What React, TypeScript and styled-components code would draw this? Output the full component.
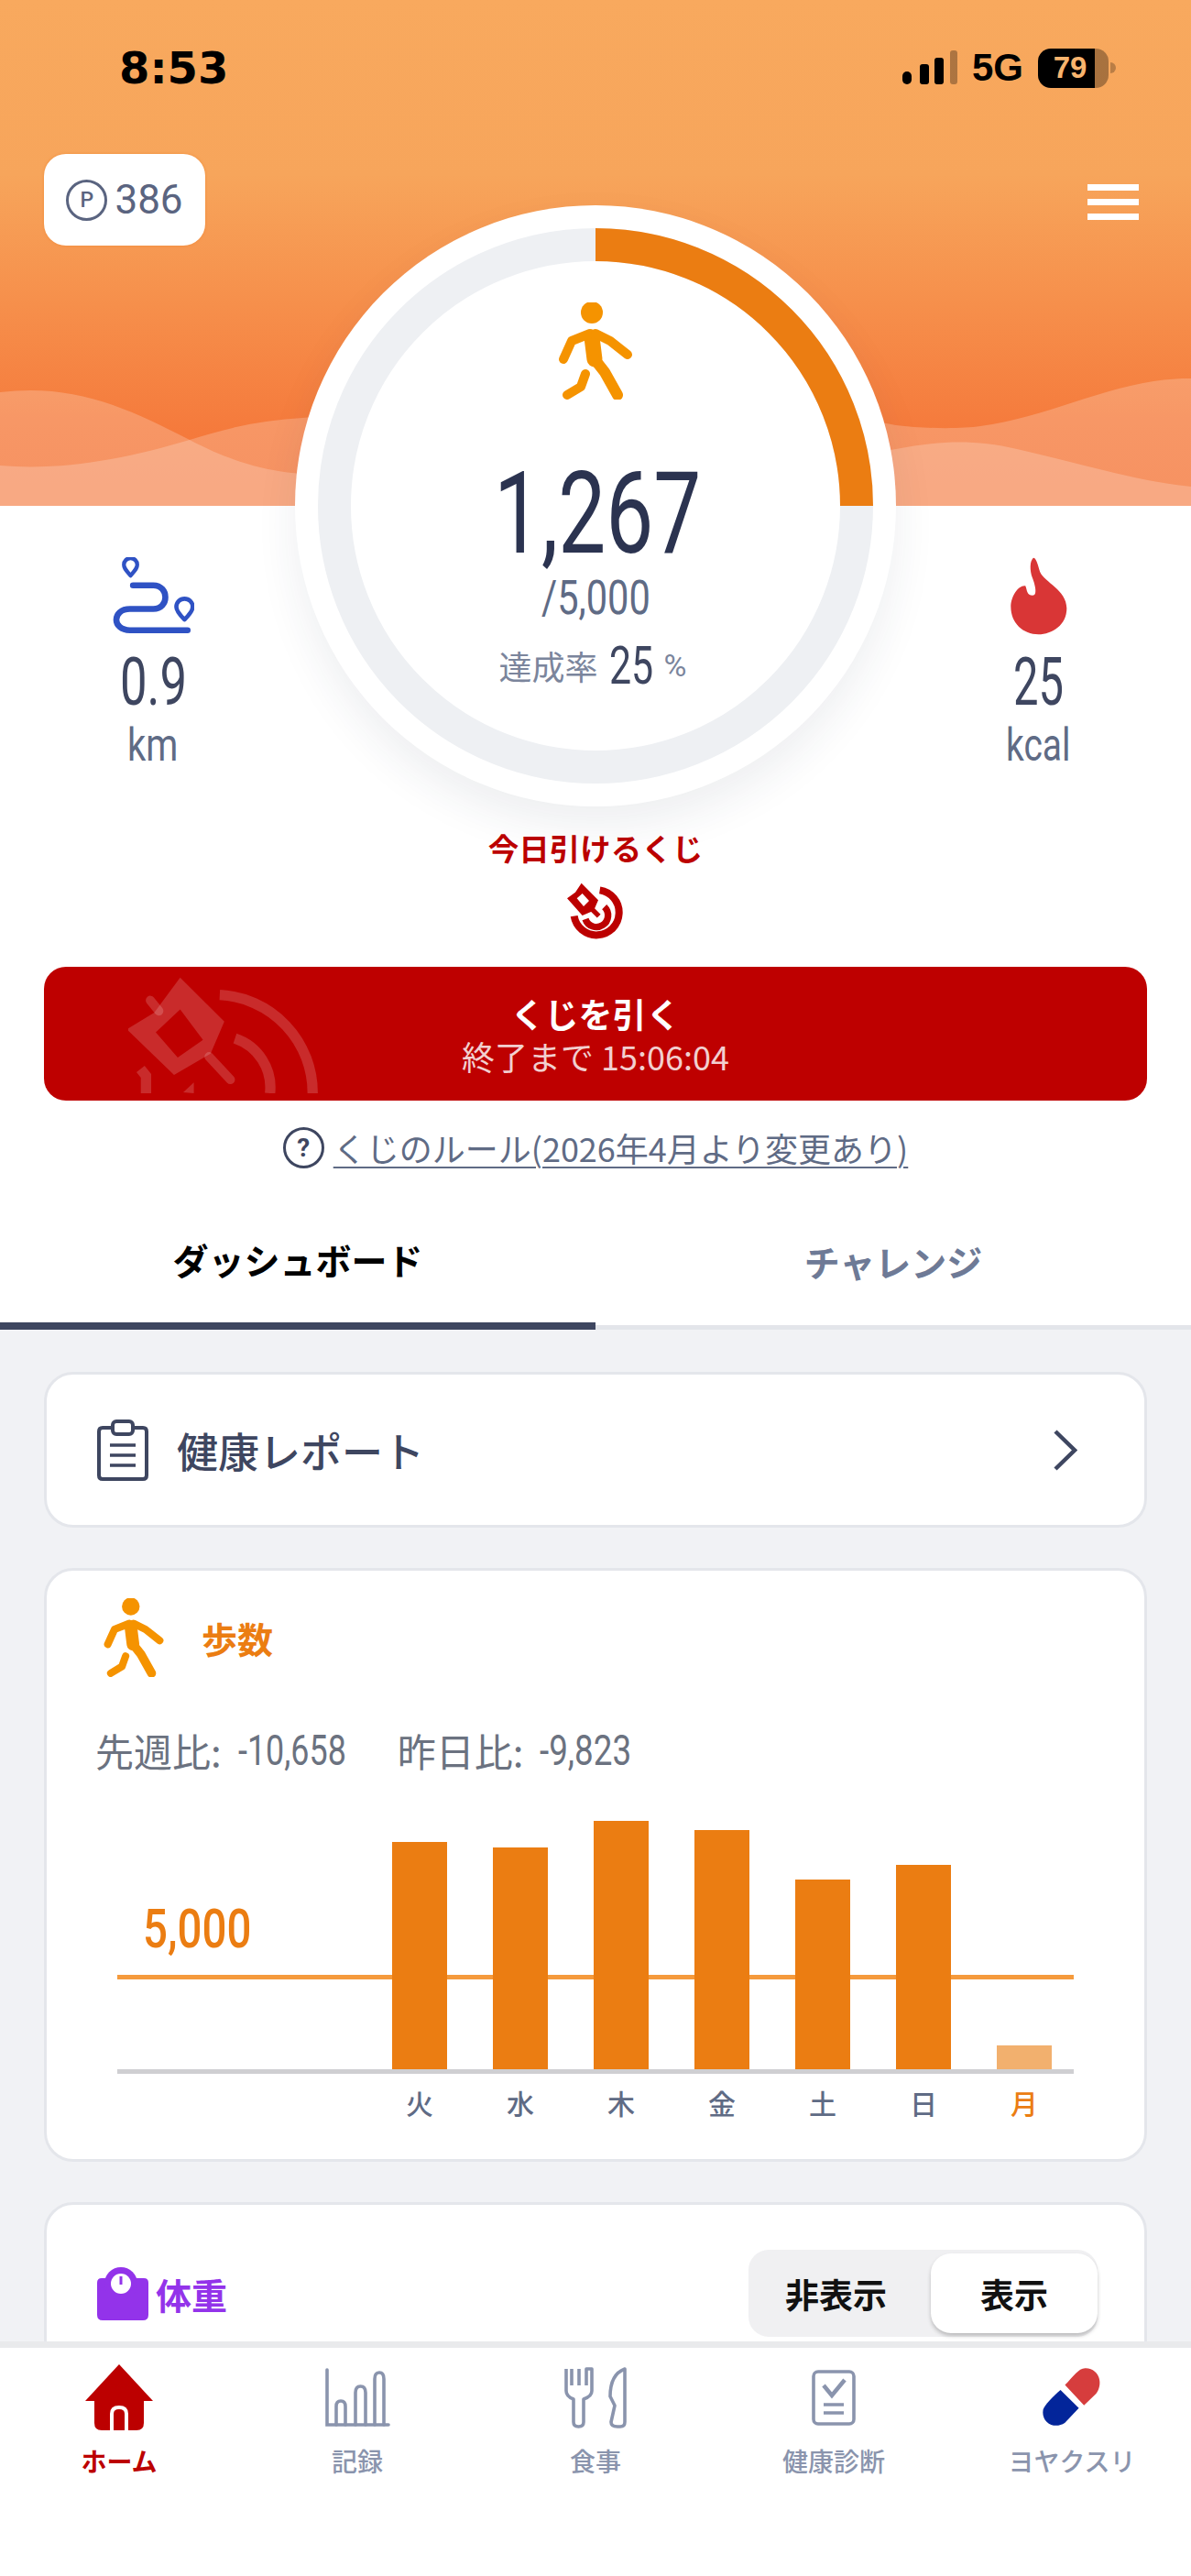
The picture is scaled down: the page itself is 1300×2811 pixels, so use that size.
import styled, { createGlobalStyle } from "styled-components";

const GlobalStyle = createGlobalStyle`
    html, body {
        margin: 0;
        padding: 0;
        background: #fff;
    }
    body {
        font-family: "Noto Sans CJK JP", "Noto Sans", sans-serif;
    }
    * {
        box-sizing: border-box;
    }
`
const Page = styled.div`
    width: 1300px;
    height: 2811px;
    display: flex;
    flex-direction: column;
    overflow: hidden;
    background: #fff;
`
const Hero = styled.section`
    position: relative;
    flex: none;
    height: 881px;
    background: linear-gradient(180deg, #f8a95e 0, #f7a55b 190px, #f57a3c 470px, #f47538 552px) top / 100% 552px no-repeat;
`
const Waves = styled.svg`
    position: absolute;
    left: 0;
    top: 0;
`
const StatusBar = styled.div`
    position: relative;
    height: 168px;
    padding: 50px 82px 0 130px;
    display: flex;
    justify-content: space-between;
    align-items: flex-start;
`
const Time = styled.div`
    font-family: "DejaVu Sans", sans-serif;
    font-weight: 700;
    font-size: 48px;
    line-height: 48px;
    color: #000;
`
const StatusRight = styled.div`
    display: flex;
    align-items: center;
    gap: 16px;
    height: 48px;
`
const Network = styled.span`
    font-family: "Liberation Sans", sans-serif;
    font-weight: 700;
    font-size: 42px;
    line-height: 48px;
    color: #000;
`
const Battery = styled.div`
    display: flex;
    align-items: center;
    height: 43px;
`
const BatteryFill = styled.div`
    width: 62px;
    height: 43px;
    padding-left: 8px;
    background: #000;
    border-radius: 14px 0 0 14px;
    display: flex;
    align-items: center;
    justify-content: center;
    font-family: "Liberation Sans", sans-serif;
    font-weight: 700;
    font-size: 33px;
    color: #f8b46e;
`
const BatteryRest = styled.div`
    width: 15px;
    height: 43px;
    background: rgba(0, 0, 0, 0.32);
    border-radius: 0 14px 14px 0;
`
const BatteryTip = styled.div`
    width: 6px;
    height: 12px;
    margin-left: 2px;
    background: rgba(0, 0, 0, 0.25);
    border-radius: 0 6px 6px 0;
`
const HeroGrid = styled.div`
    position: relative;
    display: grid;
    grid-template-columns: 322px 656px 322px;
    height: 713px;
`
const SideColumn = styled.div<{ $right?: boolean }>`
    display: flex;
    flex-direction: column;
    align-items: ${(p) => (p.$right ? "flex-end" : "flex-start")};
    padding: ${(p) => (p.$right ? "0 48px 43px 0" : "0 0 43px 48px")};
`
const PointBadge = styled.div`
    width: 176px;
    height: 100px;
    background: #fff;
    border-radius: 24px;
    box-shadow: 0 0 3px rgba(240, 130, 40, 0.7);
    display: flex;
    align-items: center;
    justify-content: center;
    gap: 8px;
    font-family: "Roboto", sans-serif;
    font-size: 44px;
    color: #5a6480;
`
const PointMark = styled.span`
    width: 45px;
    height: 45px;
    border: 3px solid #5a6480;
    border-radius: 50%;
    display: flex;
    align-items: center;
    justify-content: center;
    font-family: "Roboto", sans-serif;
    font-weight: 500;
    font-size: 23px;
`
const MenuButton = styled.div`
    width: 56px;
    margin: 33px 9px 0 0;
    display: flex;
    flex-direction: column;
    gap: 9px;
    span {
        display: block;
        height: 7px;
        background: #fff;
    }
`
const Stat = styled.div`
    margin-top: auto;
    width: 238px;
    display: flex;
    flex-direction: column;
    align-items: center;
`
const StatIcon = styled.div`
    height: 85px;
    display: flex;
    align-items: center;
    justify-content: center;
`
const Narrow = styled.span<{ $w: number; $sx: number; $size: number; $weight?: number; $color?: string }>`
    display: inline-block;
    width: ${(p) => p.$w}px;
    font-family: "Roboto", sans-serif;
    font-size: ${(p) => p.$size}px;
    font-weight: ${(p) => p.$weight ?? 400};
    line-height: ${(p) => p.$size}px;
    color: ${(p) => p.$color ?? "#3e4660"};
    white-space: nowrap;
    transform: scaleX(${(p) => p.$sx});
    transform-origin: left center;
`
const StatValue = styled.div`
    margin-top: 16px;
    display: flex;
`
const StatUnit = styled.div`
    margin-top: 7px;
    display: flex;
`
const Ring = styled.div`
    position: relative;
    width: 656px;
    height: 656px;
    margin-top: 56px;
    padding-top: 106px;
    background: #fff;
    border-radius: 50%;
    box-shadow: 0 22px 46px rgba(40, 50, 80, 0.08);
    display: flex;
    flex-direction: column;
    align-items: center;
`
const Gauge = styled.svg`
    position: absolute;
    left: 0;
    top: 0;
`
const RingIcon = styled.svg`
    position: relative;
    flex: none;
`
const StepCount = styled.div`
    position: relative;
    margin-top: 62px;
    display: flex;
`
const StepGoal = styled.div`
    position: relative;
    margin-top: 4px;
    display: flex;
`
const Rate = styled.div`
    position: relative;
    margin: 18px 6px 0 0;
    display: flex;
    align-items: center;
    gap: 12px;
    font-size: 36px;
    color: #7b859c;
`
const RatePercent = styled.span`
    font-family: "Roboto", sans-serif;
    font-size: 34px;
`
const Lottery = styled.section`
    flex: none;
    padding: 20px 48px 0;
    display: flex;
    flex-direction: column;
    align-items: center;
`
const LotteryLabel = styled.div`
    font-size: 33.5px;
    font-weight: 700;
    line-height: 48px;
    color: #bc0000;
`
const LotteryIcon = styled.svg`
    display: block;
    margin-top: 14px;
`
const DrawButton = styled.div`
    position: relative;
    width: 100%;
    height: 146px;
    margin-top: 27px;
    background: #be0000;
    border-radius: 24px;
    overflow: hidden;
    display: flex;
    flex-direction: column;
    align-items: center;
    justify-content: center;
`
const DrawWatermark = styled.svg`
    position: absolute;
    left: 92px;
    top: 10px;
`
const DrawTitle = styled.div`
    position: relative;
    font-size: 37px;
    font-weight: 700;
    line-height: 48px;
    color: #fff;
`
const DrawSub = styled.div`
    position: relative;
    font-size: 36px;
    line-height: 44px;
    color: rgba(255, 255, 255, 0.82);
`
const RuleLink = styled.div`
    margin-top: 28px;
    height: 46px;
    display: flex;
    align-items: center;
    gap: 10px;
    font-size: 36px;
    color: #5f6b85;
    span:last-child {
        text-decoration: underline;
        text-underline-offset: 5px;
        text-decoration-thickness: 2px;
    }
`
const RuleMark = styled.span`
    width: 45px;
    height: 45px;
    border: 3px solid #3e4660;
    border-radius: 50%;
    display: flex;
    align-items: center;
    justify-content: center;
    font-family: "Roboto", sans-serif;
    font-weight: 700;
    font-size: 28px;
    color: #3e4660;
`
const Tabs = styled.div`
    flex: none;
    margin-top: 22px;
    display: flex;
`
const Tab = styled.div<{ $active?: boolean }>`
    flex: 1;
    height: 154px;
    padding-top: 8px;
    display: flex;
    align-items: center;
    justify-content: center;
    font-size: 39px;
    font-weight: 700;
    color: ${(p) => (p.$active ? "#000" : "#6e7a96")};
    border-bottom: ${(p) => (p.$active ? "8px solid #3e4660" : "5px solid #e3e5ea")};
`
const Content = styled.main`
    flex: 1;
    min-height: 0;
    overflow: hidden;
    padding: 46px 48px 0;
    background: #f1f2f5;
    display: flex;
    flex-direction: column;
    gap: 44px;
`
const Card = styled.div`
    flex: none;
    background: #fff;
    border: 3px solid #e4e6eb;
    border-radius: 32px;
`
const ReportCard = styled(Card)`
    height: 170px;
    padding: 0 73px 0 55px;
    display: flex;
    align-items: center;
    gap: 31px;
    font-size: 45px;
    font-weight: 500;
    color: #3e4660;
`
const Chevron = styled.svg`
    margin-left: auto;
`
const StepsCard = styled(Card)`
    height: 648px;
    padding: 30px 77px 0 53px;
`
const StepsHeader = styled.div`
    padding-left: 8px;
    height: 86px;
    display: flex;
    align-items: center;
    gap: 40px;
    font-size: 39px;
    font-weight: 700;
    color: #eb7d12;
`
const Compare = styled.div`
    margin-top: 55px;
    height: 50px;
    display: flex;
    align-items: center;
    gap: 56px;
`
const CompareItem = styled.div`
    display: flex;
    align-items: center;
    gap: 18px;
    font-size: 42px;
    line-height: 50px;
    color: #6b7280;
`
const Chart = styled.div`
    margin: 52px 0 0 24px;
`
const Plot = styled.div`
    position: relative;
    height: 271px;
    box-sizing: content-box;
    padding-right: 24px;
    border-bottom: 5px solid #cfcfd2;
    display: flex;
    align-items: flex-end;
    justify-content: flex-end;
    gap: 50px;
`
const GoalLine = styled.div`
    position: absolute;
    left: 0;
    right: 0;
    bottom: 98px;
    height: 5px;
    background: #f59a3c;
`
const GoalLabel = styled.div`
    position: absolute;
    left: 28px;
    top: 88px;
`
const Bar = styled.div<{ $today?: boolean }>`
    position: relative;
    width: 60px;
    background: ${(p) => (p.$today ? "#f2b06e" : "#eb7d12")};
`
const Days = styled.div`
    margin-top: 11px;
    padding-right: 24px;
    display: flex;
    justify-content: flex-end;
    gap: 50px;
`
const Day = styled.div<{ $today?: boolean }>`
    width: 60px;
    text-align: center;
    font-size: 30px;
    font-weight: 500;
    line-height: 40px;
    color: ${(p) => (p.$today ? "#eb7d12" : "#5f6b85")};
`
const WeightCard = styled(Card)`
    height: 300px;
    padding: 49px 51px 0 55px;
    display: flex;
    align-items: flex-start;
    justify-content: space-between;
`
const WeightTitle = styled.div`
    height: 95px;
    display: flex;
    align-items: center;
    gap: 8px;
    font-size: 39px;
    font-weight: 700;
    color: #9333ea;
`
const Toggle = styled.div`
    width: 381px;
    height: 95px;
    padding: 4px 0;
    background: #f0f0f2;
    border-radius: 22px;
    display: flex;
`
const ToggleOption = styled.div<{ $on?: boolean }>`
    flex: ${(p) => (p.$on ? "0 0 182px" : "1")};
    padding-right: ${(p) => (p.$on ? "0" : "8px")};
    display: flex;
    align-items: center;
    justify-content: center;
    font-size: 37px;
    font-weight: 700;
    color: #111;
    background: ${(p) => (p.$on ? "#fff" : "transparent")};
    border-radius: 22px;
    box-shadow: ${(p) => (p.$on ? "0 3px 4px rgba(0, 0, 0, 0.22)" : "none")};
`
const BottomNav = styled.nav`
    flex: none;
    height: 256px;
    padding-top: 18px;
    background: #fff;
    border-top: 7px solid #e9eaec;
    display: grid;
    grid-template-columns: repeat(5, 1fr);
    align-content: start;
`
const NavItem = styled.div<{ $active?: boolean }>`
    display: flex;
    flex-direction: column;
    align-items: center;
    font-size: 28px;
    font-weight: ${(p) => (p.$active ? 700 : 500)};
    color: ${(p) => (p.$active ? "#bc0000" : "#8a94ad")};
`
const NavIcon = styled.div`
    height: 72px;
    display: flex;
    align-items: center;
    justify-content: center;
`
const NavLabel = styled.div`
    margin-top: 15px;
    line-height: 36px;
    white-space: nowrap;
`

const WalkerShape = () => (
    <g fill="none" stroke="#f59300" strokeLinecap="round" strokeLinejoin="round">
        <circle cx="38" cy="11" r="12" fill="#f59300" stroke="none" />
        <path d="M38 38 L41 62" strokeWidth="17" />
        <path d="M41 62 L52 76 L66 101" strokeWidth="12" />
        <path d="M36 34 L16 42 L7 62" strokeWidth="10" />
        <path d="M42 34 L58 42 L77 57" strokeWidth="10" />
        <path d="M31 78 L26 92 L11 101" strokeWidth="10" />
    </g>
)

const bars = [
    { day: "火", height: 248 },
    { day: "水", height: 242 },
    { day: "木", height: 271 },
    { day: "金", height: 261 },
    { day: "土", height: 207 },
    { day: "日", height: 223 },
    { day: "月", height: 26, today: true },
]

function App() {
    return (
        <Page>
            <GlobalStyle />
            <Hero>
                <Waves width="1300" height="552" viewBox="0 0 1300 552">
                    <path fill="#fff" fillOpacity="0.21" d="M0 428 C80 418 140 445 207 480 C260 508 300 515 330 517 C500 530 800 520 978 490 C1020 482 1060 478 1110 490 C1180 506 1240 525 1300 531 V552 H0 Z" />
                    <path fill="#fff" fillOpacity="0.21" d="M0 508 C70 514 140 500 207 480 C250 466 290 458 330 456 C500 440 800 430 978 464 C1010 468 1050 468 1070 465 C1150 455 1220 412 1300 413 V552 H0 Z" />
                </Waves>
                <StatusBar>
                    <Time>8:53</Time>
                    <StatusRight>
                        <svg width="60" height="42" viewBox="0 0 60 42">
                            <rect x="0" y="25" width="10" height="14" rx="5" fill="#000" />
                            <rect x="19" y="17" width="10" height="22" rx="3" fill="#000" />
                            <rect x="35" y="10" width="10" height="29" rx="3" fill="#000" />
                            <rect x="52" y="2" width="8" height="37" rx="3" fill="#000" fillOpacity="0.3" />
                        </svg>
                        <Network>5G</Network>
                        <Battery>
                            <BatteryFill>79</BatteryFill>
                            <BatteryRest />
                            <BatteryTip />
                        </Battery>
                    </StatusRight>
                </StatusBar>
                <HeroGrid>
                    <SideColumn>
                        <PointBadge>
                            <PointMark>P</PointMark>
                            386
                        </PointBadge>
                        <Stat>
                            <StatIcon>
                                <svg width="90" height="85" viewBox="125 80 272 255" fill="none" stroke="#2f52c4" strokeWidth="20" strokeLinecap="round">
                                    <path d="M195 172 H262 C315 172 315 250 262 250 H185 C125 250 125 320 185 320 H375" />
                                    <path d="M187 140 C172 122 165 115 165 104 A22 22 0 0 1 209 104 C209 115 202 122 187 140 Z" strokeWidth="13" strokeLinejoin="round" />
                                    <path d="M365 285 C345 265 338 255 338 243 A27 27 0 0 1 392 243 C392 255 385 265 365 285 Z" strokeWidth="14" strokeLinejoin="round" />
                                </svg>
                            </StatIcon>
                            <StatValue>
                                <Narrow $w={72} $sx={0.73} $size={72}>0.9</Narrow>
                            </StatValue>
                            <StatUnit>
                                <Narrow $w={56} $sx={0.8} $size={50} $color="#5f6b85">km</Narrow>
                            </StatUnit>
                        </Stat>
                    </SideColumn>
                    <Ring>
                        <Gauge width="656" height="656" viewBox="0 0 656 656" fill="none" strokeWidth="36">
                            <circle cx="328" cy="328" r="285" stroke="#eef0f3" />
                            <path d="M328 43 A285 285 0 0 1 613 328" stroke="#eb7d12" />
                        </Gauge>
                        <RingIcon width="84" height="106" viewBox="0 0 84 106">
                            <WalkerShape />
                        </RingIcon>
                        <StepCount>
                            <Narrow $w={222} $sx={0.74} $size={125} $color="#2b3350">1,267</Narrow>
                        </StepCount>
                        <StepGoal>
                            <Narrow $w={119} $sx={0.8} $size={52} $color="#5f6b85">/5,000</Narrow>
                        </StepGoal>
                        <Rate>
                            達成率
                            <Narrow $w={48} $sx={0.74} $size={58}>25</Narrow>
                            <RatePercent>%</RatePercent>
                        </Rate>
                    </Ring>
                    <SideColumn $right>
                        <MenuButton>
                            <span />
                            <span />
                            <span />
                        </MenuButton>
                        <Stat>
                            <StatIcon>
                                <svg width="63" height="85" viewBox="180 82 190 256">
                                    <path fill="#d93636" d="M258 84 C268 84 272 105 280 130 C295 165 368 190 368 250 C368 305 320 336 275 336 C225 336 184 300 184 245 C184 210 210 172 232 176 C238 190 236 208 256 208 C272 208 265 175 255 150 C246 125 246 95 258 84 Z" />
                                </svg>
                            </StatIcon>
                            <StatValue>
                                <Narrow $w={55} $sx={0.68} $size={72}>25</Narrow>
                            </StatValue>
                            <StatUnit>
                                <Narrow $w={70} $sx={0.78} $size={50} $color="#5f6b85">kcal</Narrow>
                            </StatUnit>
                        </Stat>
                    </SideColumn>
                </HeroGrid>
            </Hero>
            <Lottery>
                <LotteryLabel>今日引けるくじ</LotteryLabel>
                <LotteryIcon width="65" height="65" viewBox="415 220 195 195" fill="none" stroke="#bc0000">
                    <path d="M525 245 A74 74 0 1 1 441 330" strokeWidth="24" />
                    <path d="M540 300 A38 38 0 1 1 478 340" strokeWidth="22" />
                    <path fill="#bc0000" fillRule="evenodd" stroke="none" d="M465 222 L520 278 L505 312 L468 328 L418 272 L445 252 Z M450 272 L472 298 L490 280 L468 256 Z" />
                    <path d="M492 300 L522 330" strokeWidth="16" />
                </LotteryIcon>
                <DrawButton>
                    <DrawWatermark width="213" height="128" viewBox="300 80 640 385" fill="none" stroke="#fff" strokeOpacity="0.17" strokeWidth="34">
                        <path fill="#fff" fillOpacity="0.17" fillRule="evenodd" stroke="none" d="M470 85 L615 230 L570 335 L450 405 L295 255 L385 200 Z M390 265 L462 348 L545 290 L470 190 Z" />
                        <path d="M400 195 L372 160" strokeLinecap="round" strokeWidth="30" />
                        <path d="M565 345 L635 420" strokeLinecap="round" strokeWidth="30" />
                        <path d="M600 142 A322 322 0 0 1 905 465" />
                        <path d="M650 285 A170 170 0 0 1 765 465" />
                        <path d="M340 385 L358 408 V465" />
                        <path d="M480 462 L515 430 V465 Z" strokeWidth="0" fill="#fff" fillOpacity="0.17" />
                    </DrawWatermark>
                    <DrawTitle>くじを引く</DrawTitle>
                    <DrawSub>終了まで 15:06:04</DrawSub>
                </DrawButton>
                <RuleLink>
                    <RuleMark>?</RuleMark>
                    <span>くじのルール(2026年4月より変更あり)</span>
                </RuleLink>
            </Lottery>
            <Tabs>
                <Tab $active>ダッシュボード</Tab>
                <Tab>チャレンジ</Tab>
            </Tabs>
            <Content>
                <ReportCard>
                    <svg width="56" height="67" viewBox="0 0 56 67" fill="none" stroke="#3e4660" strokeWidth="4">
                        <path d="M17 9 H6 Q2 9 2 13 V61 Q2 65 6 65 H50 Q54 65 54 61 V13 Q54 9 50 9 H39" />
                        <rect x="17" y="2" width="22" height="14" rx="4" />
                        <path d="M14 28 H42 M14 39 H42 M14 50 H42" strokeWidth="3.5" />
                    </svg>
                    健康レポート
                    <Chevron width="27" height="47" viewBox="0 0 27 47" fill="none" stroke="#3e4660" strokeWidth="4.5">
                        <path d="M3 3 L24 23.5 L3 44" />
                    </Chevron>
                </ReportCard>
                <StepsCard>
                    <StepsHeader>
                        <svg width="68" height="86" viewBox="0 0 84 106">
                            <WalkerShape />
                        </svg>
                        歩数
                    </StepsHeader>
                    <Compare>
                        <CompareItem>
                            先週比:
                            <Narrow $w={118} $sx={0.78} $size={46} $color="#6b7280">-10,658</Narrow>
                        </CompareItem>
                        <CompareItem>
                            昨日比:
                            <Narrow $w={105} $sx={0.8} $size={46} $color="#6b7280">-9,823</Narrow>
                        </CompareItem>
                    </Compare>
                    <Chart>
                        <Plot>
                            <GoalLine />
                            <GoalLabel>
                                <Narrow $w={118} $sx={0.79} $size={60} $weight={500} $color="#eb7d12">5,000</Narrow>
                            </GoalLabel>
                            {bars.map((bar) => (
                                <Bar key={bar.day} $today={bar.today} style={{ height: bar.height }} />
                            ))}
                        </Plot>
                        <Days>
                            {bars.map((bar) => (
                                <Day key={bar.day} $today={bar.today}>{bar.day}</Day>
                            ))}
                        </Days>
                    </Chart>
                </StepsCard>
                <WeightCard>
                    <WeightTitle>
                        <svg width="56" height="58" viewBox="0 0 56 58">
                            <path fill="#9333ea" d="M5 12 H51 Q56 12 56 17 V52 Q56 58 50 58 H6 Q0 58 0 52 V17 Q0 12 5 12 Z" />
                            <circle cx="26" cy="18" r="18" fill="#9333ea" />
                            <circle cx="26" cy="18" r="11" fill="#fff" />
                            <path d="M26 10 V19" stroke="#9333ea" strokeWidth="3" />
                        </svg>
                        体重
                    </WeightTitle>
                    <Toggle>
                        <ToggleOption>非表示</ToggleOption>
                        <ToggleOption $on>表示</ToggleOption>
                    </Toggle>
                </WeightCard>
            </Content>
            <BottomNav>
                <NavItem $active>
                    <NavIcon>
                        <svg width="74" height="72" viewBox="0 0 74 72">
                            <path fill="#bc0000" d="M37 0 L74 40 H64 V64 Q64 72 56 72 H18 Q10 72 10 64 V40 H0 Z" />
                            <path d="M29 72 V54 Q29 47 37 47 Q45 47 45 54 V72" fill="#bc0000" stroke="#fff" strokeWidth="4" />
                        </svg>
                    </NavIcon>
                    <NavLabel>ホーム</NavLabel>
                </NavItem>
                <NavItem>
                    <NavIcon>
                        <svg width="71" height="64" viewBox="0 0 71 64" fill="none" stroke="#8a94ad" strokeWidth="3.6" strokeLinecap="round">
                            <path d="M2 2 V62 H69" />
                            <path d="M12 62 V42 Q12 36 17 36 Q22 36 22 42 V62" />
                            <path d="M33 62 V27 Q33 20 38.5 20 Q44 20 44 27 V62" />
                            <path d="M54 62 V12 Q54 5 59 5 Q64 5 64 12 V62" />
                        </svg>
                    </NavIcon>
                    <NavLabel>記録</NavLabel>
                </NavItem>
                <NavItem>
                    <NavIcon>
                        <svg width="68" height="67" viewBox="0 0 68 67" fill="none" stroke="#8a94ad" strokeWidth="3.6" strokeLinejoin="round">
                            <path d="M2 2 V26 Q2 32 10 35 V60 Q10 65 15.5 65 Q21 65 21 60 V35 Q30 32 30 26 V2 L24 2 V20 M8 2 V20 M16 2 V20" />
                            <path d="M66 2 Q50 8 50 32 L55 42 L51 60 Q51 65 58 65 H61 Q66 65 66 60 Z" />
                        </svg>
                    </NavIcon>
                    <NavLabel>食事</NavLabel>
                </NavItem>
                <NavItem>
                    <NavIcon>
                        <svg width="48" height="61" viewBox="0 0 48 61" fill="none" stroke="#8a94ad" strokeWidth="3.6">
                            <rect x="2" y="2" width="44" height="57" rx="5" />
                            <path d="M13 17 L22 28 L36 11" strokeWidth="4.5" />
                            <path d="M13 38 H35 M13 47 H35" />
                        </svg>
                    </NavIcon>
                    <NavLabel>健康診断</NavLabel>
                </NavItem>
                <NavItem>
                    <NavIcon>
                        <svg width="68" height="68" viewBox="1205 90 180 215" preserveAspectRatio="none">
                            <path fill="#d63d3d" d="M1275 155 L1330 225 L1365 185 C1385 155 1378 100 1335 97 C1315 95 1300 125 1275 155 Z" />
                            <path fill="#03259a" d="M1262 172 L1315 235 L1275 285 C1245 310 1205 285 1212 240 C1215 225 1240 195 1262 172 Z" />
                        </svg>
                    </NavIcon>
                    <NavLabel>ヨヤクスリ</NavLabel>
                </NavItem>
            </BottomNav>
        </Page>
    );
}

export default App;
